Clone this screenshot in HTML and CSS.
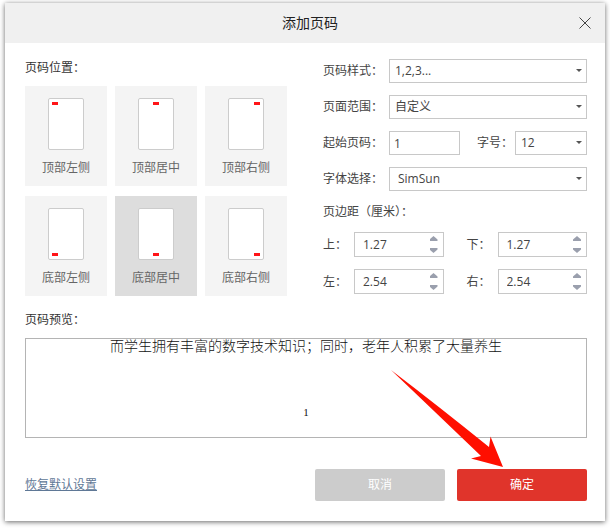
FILE: index.html
```html
<!DOCTYPE html>
<html lang="zh-CN">
<head>
  <meta charset="UTF-8" />
  <meta name="viewport" content="width=device-width, initial-scale=1.0"/>
  <title>添加页码</title>
  <link rel="stylesheet" href="styles.css">
</head>
<body>
  <form class="dialog">
    <header class="title-bar">
      <h1>添加页码</h1>
      <button type="button" class="close-btn" aria-label="关闭">
        <svg width="12" height="12" viewBox="0 0 12 12"><path d="M0.5 0.5L11.5 11.5M11.5 0.5L0.5 11.5" stroke="#444" fill="none"/></svg>
      </button>
    </header>

    <div class="content">
      <div class="columns">
        <section class="position">
          <h2>页码位置：</h2>
          <div class="cards">
            <button type="button" class="card"><span class="sheet"><i class="mark"></i></span>顶部左侧</button>
            <button type="button" class="card"><span class="sheet center"><i class="mark"></i></span>顶部居中</button>
            <button type="button" class="card"><span class="sheet right"><i class="mark"></i></span>顶部右侧</button>
            <button type="button" class="card"><span class="sheet bottom"><i class="mark"></i></span>底部左侧</button>
            <button type="button" class="card active"><span class="sheet bottom center"><i class="mark"></i></span>底部居中</button>
            <button type="button" class="card"><span class="sheet bottom right"><i class="mark"></i></span>底部右侧</button>
          </div>
        </section>

        <section class="settings">
          <div class="row">
            <label for="style">页码样式：</label>
            <div class="select"><select id="style"><option>1,2,3...</option></select></div>
          </div>
          <div class="row">
            <label for="range">页面范围：</label>
            <div class="select"><select id="range"><option>自定义</option></select></div>
          </div>
          <div class="row">
            <label for="start">起始页码：</label>
            <input class="start" id="start" type="text" value="1">
            <label class="size-label" for="size">字号：</label>
            <div class="select size"><select id="size"><option>12</option></select></div>
          </div>
          <div class="row">
            <label for="font">字体选择：</label>
            <div class="select font"><select id="font"><option>SimSun</option></select></div>
          </div>

          <h2 class="margin-title">页边距（厘米）：</h2>
          <div class="margins">
            <div class="margin">
              <label for="top">上：</label>
              <div class="spinner">
                <input id="top" type="text" value="1.27">
                <div class="steps">
                  <button type="button" class="up" aria-label="增加"></button>
                  <button type="button" class="down" aria-label="减少"></button>
                </div>
              </div>
            </div>
            <div class="margin">
              <label for="bottom">下：</label>
              <div class="spinner">
                <input id="bottom" type="text" value="1.27">
                <div class="steps">
                  <button type="button" class="up" aria-label="增加"></button>
                  <button type="button" class="down" aria-label="减少"></button>
                </div>
              </div>
            </div>
            <div class="margin">
              <label for="left">左：</label>
              <div class="spinner">
                <input id="left" type="text" value="2.54">
                <div class="steps">
                  <button type="button" class="up" aria-label="增加"></button>
                  <button type="button" class="down" aria-label="减少"></button>
                </div>
              </div>
            </div>
            <div class="margin">
              <label for="right">右：</label>
              <div class="spinner">
                <input id="right" type="text" value="2.54">
                <div class="steps">
                  <button type="button" class="up" aria-label="增加"></button>
                  <button type="button" class="down" aria-label="减少"></button>
                </div>
              </div>
            </div>
          </div>
        </section>
      </div>

      <section class="preview-section">
        <h2>页码预览：</h2>
        <div class="preview">
          <p class="preview-text">而学生拥有丰富的数字技术知识；同时，老年人积累了大量养生</p>
          <p class="preview-number">1</p>
        </div>
      </section>

      <footer class="footer">
        <a class="reset" href="#">恢复默认设置</a>
        <button type="button" class="btn cancel">取消</button>
        <button type="submit" class="btn ok">确定</button>
      </footer>
    </div>

    <svg class="pointer" width="112" height="97" viewBox="0 0 112 97" aria-hidden="true">
      <path d="M0 0Q46 35 98 77L99.500 66.500L112 97L80 88.500L90 86Q42 40 0 0Z" fill="#ff0f00"/>
    </svg>
  </form>
</body>
</html>
```

FILE: styles.css
```css
* {
  box-sizing: border-box;
}

body {
  margin: 0;
  padding: 3px 5px 7px;
  background-color: #fff;
  color: #444;
  font-family: "Open Sans", "Noto Sans CJK SC", sans-serif;
  font-size: 12px;
  line-height: 16px;
}

h1, h2, p {
  margin: 0;
  font-weight: normal;
}

h2 {
  color: #333;
  font-size: 12px;
  line-height: 18px;
}

button, input, select {
  margin: 0;
  border: 0;
  padding: 0;
  background: none;
  color: inherit;
  font: inherit;
}

.dialog {
  position: relative;
  background-color: #fff;
  box-shadow: 0 1px 5px rgba(0, 0, 0, 0.6);
}

.title-bar {
  display: grid;
  grid-template-columns: 50px 1fr 40px;
  align-items: center;
  height: 40px;
  background-color: #f0f0f0;
}

.title-bar h1 {
  grid-column: 2;
  text-align: center;
  font-size: 14px;
  line-height: 20px;
  color: #222;
}

.close-btn {
  display: flex;
  justify-content: center;
}

.content {
  padding: 16px 18px 20px 20px;
}

.columns {
  display: flex;
  gap: 36px;
}

.position {
  flex: 262 1 0;
  min-width: 0;
}

.cards {
  display: grid;
  grid-template-columns: repeat(3, 1fr);
  gap: 10px 8px;
  margin-top: 9px;
}

.card {
  display: flex;
  flex-direction: column;
  align-items: center;
  gap: 10px;
  padding: 12px 0 10px;
  background-color: #f4f4f4;
  color: #666;
}

.card.active {
  background-color: #ddd;
}

/* little page with the number mark on it */
.sheet {
  display: flex;
  width: 36px;
  height: 52px;
  padding: 3px;
  border: 1px solid #ccc;
  border-radius: 2px;
  background-color: #fff;
}

.sheet.center { justify-content: center; }
.sheet.right { justify-content: flex-end; }
.sheet.bottom { align-items: flex-end; }

.mark {
  width: 6px;
  height: 3px;
  background-color: #ff1418;
}

.settings {
  flex: 264 1 0;
  min-width: 0;
}

.row {
  display: flex;
  align-items: center;
  height: 24px;
  margin-bottom: 12px;
}

.row label {
  flex: none;
  width: 66px;
}

.row .size-label {
  width: 38px;
  margin-left: 17px;
}

.select {
  position: relative;
  flex: 1;
  min-width: 0;
  height: 24px;
}

.select select {
  width: 100%;
  height: 100%;
  padding: 0 20px 0 5px;
  border: 1px solid #c8c8c8;
  background-color: #fff;
  appearance: none;
}

.select.font select {
  padding-left: 8px;
}

.select::after {
  content: "";
  position: absolute;
  top: 10px;
  right: 5px;
  border: 3px solid transparent;
  border-top-color: #555;
  border-bottom: 0;
  pointer-events: none;
}

.start {
  flex: none;
  width: 71px;
  height: 24px;
  padding: 0 4px;
  border: 1px solid #c8c8c8;
}

.margin-title {
  color: #444;
}

.margins {
  display: grid;
  grid-template-columns: 1fr 1fr;
  gap: 12px 23px;
  margin-top: 11px;
}

.margin {
  display: flex;
  align-items: center;
  min-width: 0;
}

.margin label {
  flex: none;
  width: 31px;
}

.spinner {
  display: flex;
  flex: 1;
  min-width: 0;
  height: 25px;
  padding: 0 5px 0 8px;
  border: 1px solid #c8c8c8;
}

.spinner input {
  flex: 1;
  width: 100%;
  min-width: 0;
}

.steps {
  display: flex;
  flex: none;
  flex-direction: column;
  justify-content: space-between;
  padding: 3px 0;
}

.up, .down {
  width: 8px;
  height: 5px;
  background-color: #9a9fad;
  clip-path: polygon(50% 0, 100% 70%, 100% 100%, 0 100%, 0 70%);
}

.down {
  clip-path: polygon(0 0, 100% 0, 100% 30%, 50% 100%, 0 30%);
}

.preview-section {
  margin-top: 15px;
}

.preview {
  display: flex;
  flex-direction: column;
  justify-content: space-between;
  height: 100px;
  margin-top: 9px;
  padding-bottom: 17px;
  border: 1px solid #b4b4b4;
  color: #111;
  text-align: center;
  font-family: "Liberation Serif", "Noto Sans CJK SC", serif;
}

.preview-text {
  font-size: 14px;
  font-weight: 300;
}

.preview-number {
  font-size: 11px;
}

.footer {
  display: flex;
  align-items: center;
  gap: 12px;
  margin-top: 31px;
}

.reset {
  margin-right: auto;
  color: #5f7896;
}

.btn {
  width: 130px;
  height: 32px;
  border-radius: 2px;
  color: #fff;
}

.cancel { background-color: #ccc; }
.ok { background-color: #e0342b; }

.pointer {
  position: absolute;
  right: 102px;
  bottom: 54px;
}
```
